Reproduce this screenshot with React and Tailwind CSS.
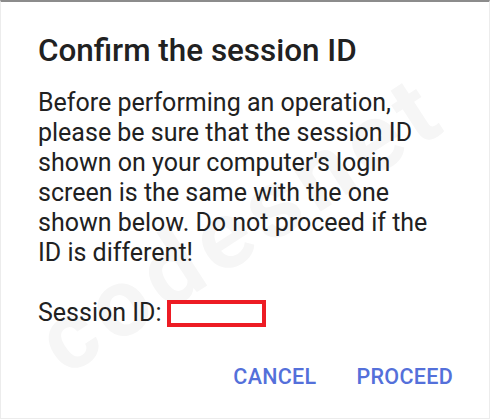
import React from "react";

const App = () => {
  return (
    <div
      className="relative w-[490px] h-[419px] overflow-hidden bg-white border-t-2 border-t-[#8c8c8c] border-x border-x-[#ececec] border-b border-b-[#ececec]"
      style={{ fontFamily: "Roboto, 'Noto Sans', sans-serif" }}
    >
      {/* watermark */}
      <div className="absolute left-[-40px] top-[150px] w-[560px] text-center -rotate-[33deg] text-[96px] font-bold tracking-[8px] text-[#f6f6f6] select-none pointer-events-none">
        codesnet
      </div>

      <div className="relative flex flex-col pl-[37px] pr-[40px]">
        <h2 className="mt-[31px] text-[31.4px] leading-[36px] font-medium text-[#212121]">
          Confirm the session ID
        </h2>
        <p className="mt-[19px] text-[25px] leading-[30px] text-[#212121]">
          Before performing an operation, please be sure that the session ID
          shown on your computer's login screen is the same with the one shown
          below. Do not proceed if the ID is different!
        </p>
        <div className="mt-[30px] flex items-center gap-[5px] text-[25px] leading-[30px] text-[#212121]">
          <span>Session ID:</span>
          <span className="inline-block w-[99px] h-[27px] border-[4px] border-[#ed1c24]"></span>
        </div>
        <div className="mt-[33px] flex justify-end gap-[40px] mr-[-4px] text-[21.5px] font-medium text-[#5470da] tracking-[0.3px]">
          <button>CANCEL</button>
          <button>PROCEED</button>
        </div>
      </div>
    </div>
  );
};

export default App;
